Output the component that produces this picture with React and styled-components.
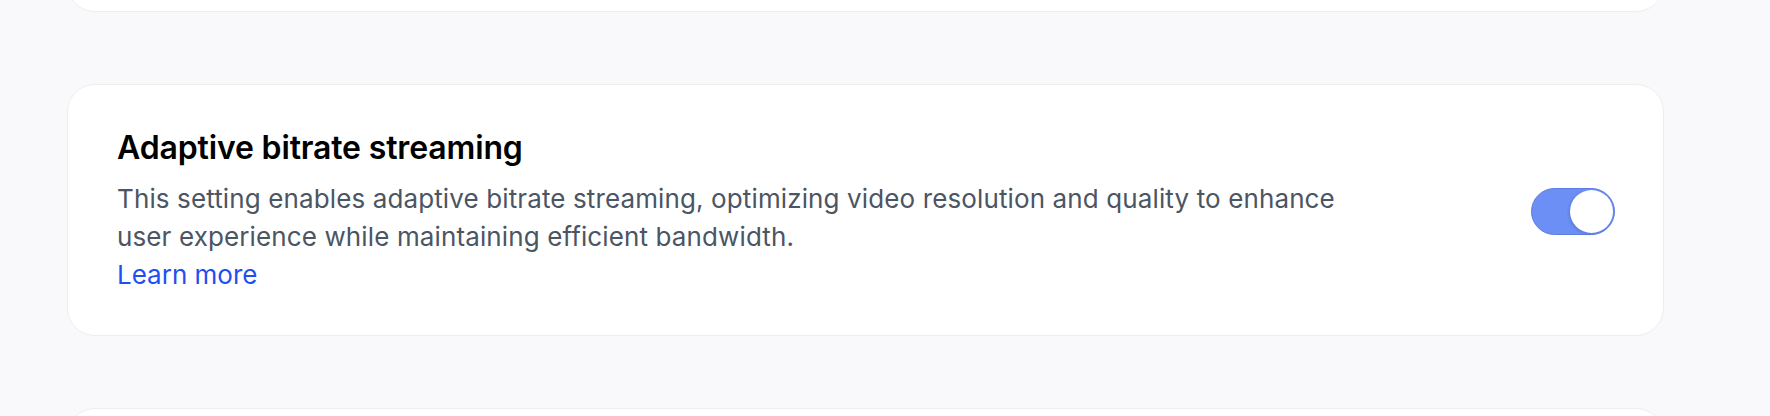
import React, { useState } from "react";
import styled, { createGlobalStyle } from "styled-components";

const GlobalStyle = createGlobalStyle`
  html, body {
    margin: 0;
    padding: 0;
    background: #f9f9fb;
    font-family: Inter, "Noto Sans", "Liberation Sans", sans-serif;
    -webkit-font-smoothing: antialiased;
  }
`;

const Page = styled.div`
  height: 416px;
  overflow: hidden;
  padding: 0 106px 0 67px;
`;

const List = styled.div`
  display: flex;
  flex-direction: column;
  gap: 72px;
  margin-top: -240px; /* list is scrolled, previous card peeks in at the top */
`;

const Card = styled.section`
  box-sizing: border-box;
  width: 1597px;
  min-height: 252px;
  background: #fff;
  border: 1px solid #eeeef1;
  border-radius: 28px;
  padding: 44px 48px 41px 49px;
  display: flex;
  align-items: center;
  justify-content: space-between;
`;

const Text = styled.div`
  max-width: 1250px;
`;

const Title = styled.h3`
  margin: 0 0 13px;
  font-size: 32px;
  line-height: 38px;
  font-weight: 600;
  color: #000;
  letter-spacing: -0.15px;
`;

const Description = styled.p`
  margin: 0;
  font-size: 26px;
  line-height: 38px;
  color: #4b5563;
  letter-spacing: 0.12px;
`;

const LearnMore = styled.a`
  display: block;
  font-size: 26px;
  line-height: 38px;
  color: #1f4ff2;
  text-decoration: none;
  cursor: pointer;
`;

const Track = styled.button`
  box-sizing: border-box;
  flex-shrink: 0;
  width: 84px;
  height: 47px;
  padding: 1px;
  border-radius: 999px;
  border: 1px solid ${(p) => (p.$on ? "#5d7de3" : "#d1d5db")};
  background: ${(p) => (p.$on ? "#6c8ff5" : "#e5e7eb")};
  display: flex;
  justify-content: ${(p) => (p.$on ? "flex-end" : "flex-start")};
  align-items: center;
  cursor: pointer;
`;

const Knob = styled.span`
  width: 43px;
  height: 43px;
  border-radius: 50%;
  background: #fff;
  box-shadow: -1px 1px 3px rgba(30, 50, 120, 0.25);
`;

const Toggle = ({ on, onChange }) => (
  <Track $on={on} onClick={() => onChange(!on)} aria-pressed={on}>
    <Knob />
  </Track>
);

const App = () => {
  const [abr, setAbr] = useState(true);
  return (
    <>
      <GlobalStyle />
      <Page>
        <List>
          <Card />
          <Card>
            <Text>
              <Title>Adaptive bitrate streaming</Title>
              <Description>
                This setting enables adaptive bitrate streaming, optimizing video
                resolution and quality to enhance user experience while maintaining
                efficient bandwidth.
              </Description>
              <LearnMore>Learn more</LearnMore>
            </Text>
            <Toggle on={abr} onChange={setAbr} />
          </Card>
          <Card />
        </List>
      </Page>
    </>
  );
};

export default App;
